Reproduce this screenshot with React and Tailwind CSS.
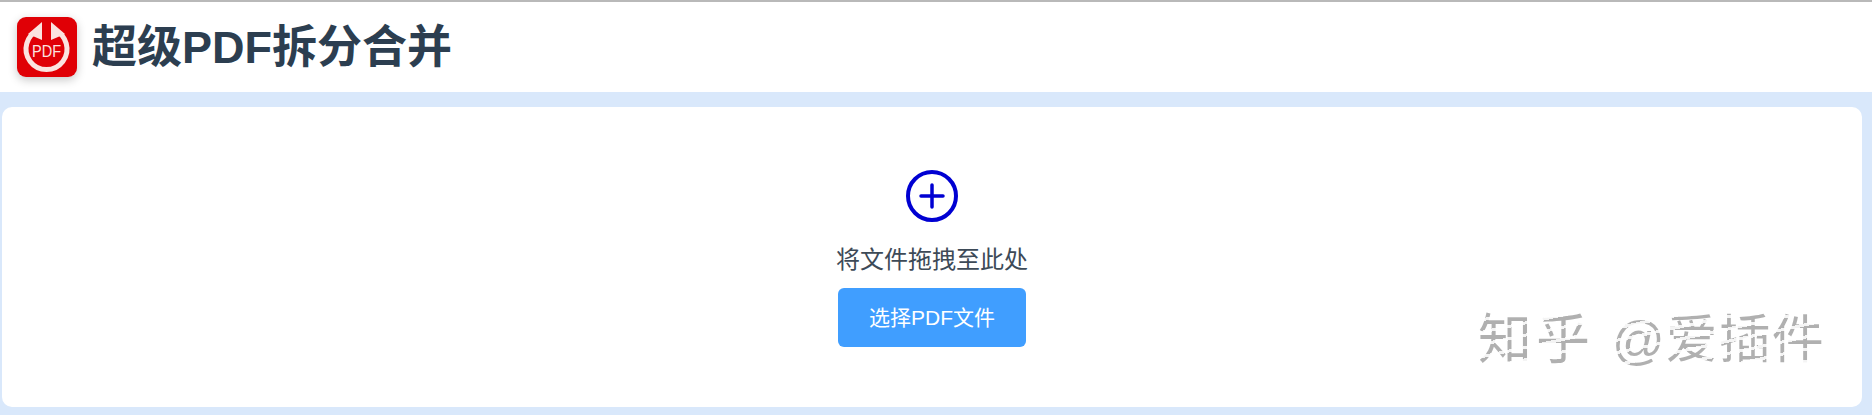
export default function App() {
  return (
    <div className="relative h-[415px] w-[1872px] overflow-hidden bg-[#d9e8fb] font-['Liberation_Sans','Noto_Sans_CJK_SC',sans-serif]">
      <header className="flex h-[92px] items-center gap-[15px] border-t-2 border-[#b9b9b9] bg-white pl-[17px]">
        <div className="h-[60px] w-[60px] shrink-0 rounded-[9px] bg-[#e00006] shadow-[0_3px_10px_rgba(0,0,0,0.22)]">
          <svg viewBox="0 0 60 60" width="60" height="60">
            <path d="M22 13 A20.5 20.5 0 1 0 37 13" fill="none" stroke="#fbe4e0" strokeWidth="5" />
            <path d="M25 5 L25 23 L11 17 Z" fill="#fbe4e0" />
            <path d="M34 5 L34 23 L48 17 Z" fill="#fbe4e0" />
            <text x="29.5" y="39.5" textAnchor="middle" fontSize="16" textLength="29" lengthAdjust="spacingAndGlyphs" fill="#fbe4e0" fontFamily="Liberation Sans">PDF</text>
          </svg>
        </div>
        <h1 className="text-[45px] leading-none font-bold text-[#2c3e50]">超级PDF拆分合并</h1>
      </header>
      <main className="mt-[15px] mr-[10px] ml-[2px] flex h-[300px] flex-col items-center rounded-[10px] bg-white pt-[63px]">
        <svg viewBox="0 0 52 52" width="52" height="52" className="shrink-0">
          <circle cx="26" cy="26" r="24" fill="none" stroke="#0000d2" strokeWidth="4" />
          <path d="M15 26 H37 M26 15 V37" fill="none" stroke="#0000d2" strokeWidth="3.5" strokeLinecap="round" />
        </svg>
        <p className="mt-[22px] text-[24px] leading-[32px] text-[#3d4a57]">将文件拖拽至此处</p>
        <button className="mt-[12px] flex h-[59px] w-[188px] items-center justify-center rounded-[6px] bg-[#409eff] text-[21px] text-white">
          选择PDF文件
        </button>
      </main>
      <div className="absolute top-[310px] left-[1478px] flex items-center bg-[repeating-linear-gradient(168deg,#b0b0b0_0px,#b0b0b0_9px,#f4f4f4_9px,#f4f4f4_12px)] bg-clip-text text-[54px] leading-[60px] whitespace-pre text-transparent">
        <span className="tracking-[4px]">知乎</span>
        <span className="ml-[18px] text-[52px] tracking-[1px]">@爱插件</span>
      </div>
    </div>
  );
}
